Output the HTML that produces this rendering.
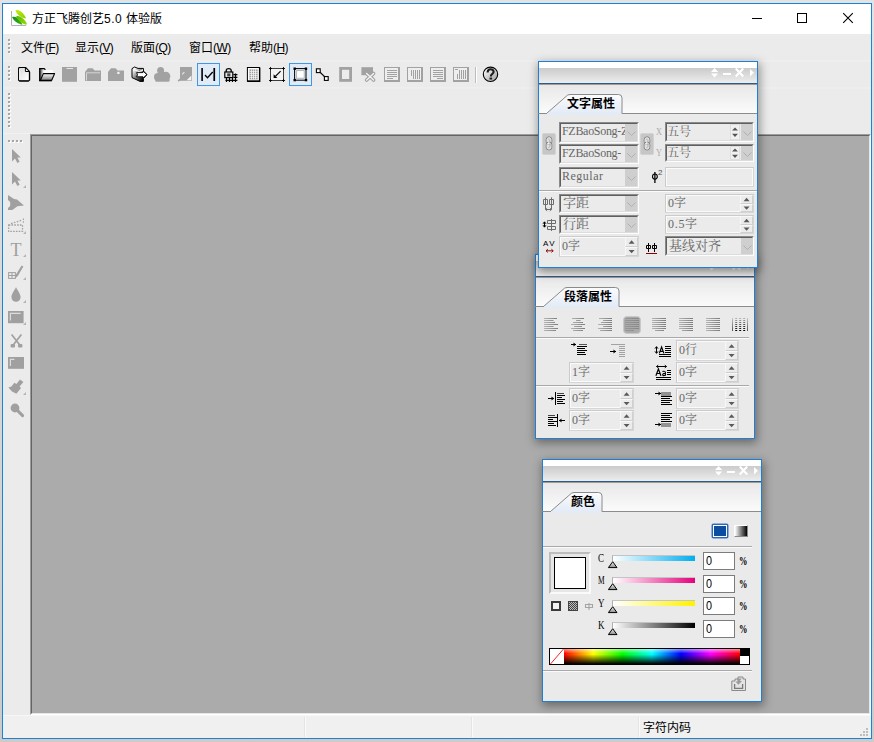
<!DOCTYPE html>
<html lang="zh"><head><meta charset="utf-8"><title>方正飞腾创艺5.0 体验版</title>
<style>
html,body{margin:0;padding:0}
body{width:874px;height:742px;position:relative;overflow:hidden;background:linear-gradient(#e3e3e3,#cdcbca);
 font-family:"Liberation Sans","Noto Sans CJK SC",sans-serif;font-size:12px;color:#000}
div,svg,span{position:absolute;box-sizing:border-box}
svg{overflow:visible}
.t{white-space:nowrap;line-height:16px;height:16px}
.ss{font-family:"Liberation Serif","Noto Serif CJK SC",serif;color:#666;font-size:12px;white-space:nowrap;line-height:14px}
.mono{font-family:"Liberation Mono","Noto Serif CJK SC",monospace;color:#666;font-size:10px;white-space:nowrap;line-height:14px}
.sunk{border:1px solid;border-color:#8a8a8a #fdfdfd #fdfdfd #8a8a8a;background:#ebebeb}
.sunk:before{content:"";position:absolute;left:0;top:0;right:0;bottom:0;border:1px solid;border-color:#5f5f5f #dcdcdc #dcdcdc #5f5f5f}
.flat{border:1px solid;border-color:#cbcbcb #d6d6d6 #d6d6d6 #cbcbcb;background:#ebebeb}
.flat:before{content:"";position:absolute;left:0;top:0;right:0;bottom:0;border:1px solid #fafafa}
.dd{background:#cfcfcf}
.hl{border:1px solid #3d97ea;background:#e1ebf8}
.grip i{position:absolute;width:2px;height:2px;background:#fff}
.grip i:before{content:"";position:absolute;left:-1px;top:-1px;width:2px;height:2px;background:#a6a6a6}
.panel{background:#eaeaea;border:1px solid #1c80d6;box-shadow:1px 3px 9px 1px rgba(0,0,0,.38)}
.sep{height:2px;border-top:1px solid #a9a9a9;border-bottom:1px solid #fbfbfb}
</style></head>
<body>
<div style="left:2px;top:3px;width:870px;height:736px;border:1px solid #1883d7;background:#ebebeb"></div>
<div style="left:3px;top:4px;width:868px;height:30px;background:#fff"></div>
<svg style="left:11px;top:9px" width="17" height="17" viewBox="0 0 17 17" >
<defs><linearGradient id="lf1" x1="0" y1="0" x2="1" y2="1"><stop offset="0" stop-color="#0a9416"/><stop offset="1" stop-color="#3fae1c"/></linearGradient>
<linearGradient id="lf2" x1="0" y1="0" x2="1" y2="1"><stop offset="0" stop-color="#c6ee08"/><stop offset="1" stop-color="#86cf00"/></linearGradient>
<linearGradient id="lf3" x1="0" y1="0" x2="1" y2="1"><stop offset="0" stop-color="#58b800"/><stop offset="1" stop-color="#9add00"/></linearGradient></defs>
<path d="M0.5 2 V16.5 H15" fill="none" stroke="#b2b2b2" stroke-width="1"/>
<path d="M4.4 1.4 C7.4 0 12.8 3.6 15 9.4 C11.2 9 6 6.2 4.4 1.4Z" fill="url(#lf2)"/>
<path d="M1 8 C4.6 6.6 9.6 10 11.4 15.8 C7.6 15 2.8 12.4 1 8Z" fill="url(#lf1)"/>
<path d="M5.2 7.4 C8.6 6 14 10 16.2 15.6 C12 15.4 7 12 5.2 7.4Z" fill="url(#lf3)"/>
</svg>
<div class="t" style="left:32px;top:11px;font-size:12px">方正飞腾创艺<span style="position:static;letter-spacing:0.5px">5.0 </span>体验版</div>
<div style="left:752px;top:18px;width:10px;height:1px;background:#000"></div>
<div style="left:797px;top:13px;width:10px;height:10px;border:1px solid #000"></div>
<svg style="left:843px;top:13px" width="10" height="10" viewBox="0 0 10 10" ><path d="M0.2 0.2 L9.8 9.8 M9.8 0.2 L0.2 9.8" stroke="#000" stroke-width="1.1" fill="none"/></svg>
<div style="left:3px;top:60px;width:868px;height:2px;background:#eeeeee"></div>
<div style="left:3px;top:87px;width:868px;height:2px;background:#eeeeee"></div>
<div style="left:3px;top:133px;width:27px;height:1px;background:#f1f1f1"></div>
<div class="grip" style="left:9px;top:40px"><i style="left:0;top:0px"></i><i style="left:0;top:4px"></i><i style="left:0;top:8px"></i><i style="left:0;top:12px"></i></div>
<div class="grip" style="left:9px;top:67px"><i style="left:0;top:0px"></i><i style="left:0;top:4px"></i><i style="left:0;top:8px"></i><i style="left:0;top:12px"></i></div>
<div class="grip" style="left:9px;top:94px"><i style="left:0;top:0px"></i><i style="left:0;top:4px"></i><i style="left:0;top:8px"></i><i style="left:0;top:12px"></i><i style="left:0;top:16px"></i><i style="left:0;top:20px"></i><i style="left:0;top:24px"></i><i style="left:0;top:28px"></i><i style="left:0;top:32px"></i></div>
<div class="grip" style="left:9px;top:141px"><i style="left:0px;top:0"></i><i style="left:4px;top:0"></i><i style="left:8px;top:0"></i><i style="left:12px;top:0"></i></div>
<div class="t" style="left:21px;top:40px">文件<span style="position:static;letter-spacing:-0.6px">(<u>F</u>)</span></div>
<div class="t" style="left:75px;top:40px">显示<span style="position:static;letter-spacing:-0.6px">(<u>V</u>)</span></div>
<div class="t" style="left:131px;top:40px">版面<span style="position:static;letter-spacing:-0.6px">(<u>Q</u>)</span></div>
<div class="t" style="left:189px;top:40px">窗口<span style="position:static;letter-spacing:-0.6px">(<u>W</u>)</span></div>
<div class="t" style="left:249px;top:40px">帮助<span style="position:static;letter-spacing:-0.6px">(<u>H</u>)</span></div>
<div style="left:30px;top:134px;width:841px;height:581px;border:1px solid;border-color:#9d9d9d #fff #fff #9d9d9d;background:#ababab"></div>
<div style="left:31px;top:135px;width:839px;height:579px;border:1px solid;border-color:#646464 #e6e6e6 #e6e6e6 #646464"></div>
<div style="left:3px;top:715px;width:868px;height:23px;background:#f0f0f0"></div>
<div style="left:3px;top:715px;width:868px;height:1px;background:#f7f7f7"></div>
<div class="t" style="left:643px;top:720px">字符内码</div>
<div style="left:304px;top:717px;width:1px;height:20px;background:#e4e4e4"></div>
<div style="left:305px;top:717px;width:1px;height:20px;background:#fafafa"></div>
<div style="left:471px;top:717px;width:1px;height:20px;background:#e4e4e4"></div>
<div style="left:472px;top:717px;width:1px;height:20px;background:#fafafa"></div>
<div style="left:638px;top:717px;width:1px;height:20px;background:#e4e4e4"></div>
<div style="left:639px;top:717px;width:1px;height:20px;background:#fafafa"></div>
<div style="left:866px;top:728px;width:2px;height:2px;background:#bdbdbd"></div>
<div style="left:863px;top:731px;width:2px;height:2px;background:#bdbdbd"></div>
<div style="left:866px;top:731px;width:2px;height:2px;background:#bdbdbd"></div>
<div style="left:860px;top:734px;width:2px;height:2px;background:#bdbdbd"></div>
<div style="left:863px;top:734px;width:2px;height:2px;background:#bdbdbd"></div>
<div style="left:866px;top:734px;width:2px;height:2px;background:#bdbdbd"></div>
<svg style="left:16px;top:66px" width="16" height="16" viewBox="0 0 16 16" ><defs><linearGradient id="gdoc" x1="0" y1="0" x2="1" y2="1"><stop offset="0" stop-color="#d6d6d6"/><stop offset="0.8" stop-color="#fbfbfb"/></linearGradient></defs>
<path d="M3.4 1.5 H9.6 L13.4 5.3 V14 Q13.4 14.8 12.6 14.8 H3.4 Q2.6 14.8 2.6 14 V2.3 Q2.6 1.5 3.4 1.5 Z" fill="url(#gdoc)" stroke="#000" stroke-width="1.1" stroke-linejoin="round"/>
<path d="M3.2 15.2 H12.8 M13.7 6 V14.4" fill="none" stroke="#000" stroke-width="1"/>
<path d="M9.4 1.7 V5.5 H13.2 Z" fill="#fff" stroke="#000" stroke-width="1" stroke-linejoin="round"/>
<path d="M3.7 3 V13.6" stroke="#fff" stroke-width="0.9"/></svg>
<svg style="left:39px;top:66px" width="16" height="16" viewBox="0 0 16 16" ><defs><linearGradient id="gfol" x1="0" y1="0" x2="0" y2="1"><stop offset="0" stop-color="#fff"/><stop offset="1" stop-color="#7c7c7c"/></linearGradient>
<linearGradient id="gback" x1="0" y1="0" x2="1" y2="0"><stop offset="0" stop-color="#3a3a3a"/><stop offset="0.32" stop-color="#fff"/></linearGradient></defs>
<path d="M0.6 2.6 H5 L6 4 H14 V8 H4 L1.5 14.4 H0.6 Z" fill="url(#gback)"/>
<path d="M0.7 2 V15 M0.2 2.6 H5.2 L6.4 3.9" fill="none" stroke="#000" stroke-width="1.2"/>
<path d="M4.4 7.6 H15.6 L12.7 14.3 H1.4 Z" fill="url(#gfol)" stroke="#000" stroke-width="1.1" stroke-linejoin="round"/>
<path d="M0.2 14.7 H12.8" stroke="#000" stroke-width="1.3"/></svg>
<svg style="left:62px;top:66px" width="16" height="16" viewBox="0 0 16 16" ><rect x="0" y="1" width="15" height="14.8" fill="#a2a2a2"/><rect x="4.5" y="2" width="6.5" height="1" fill="#e6e6e6"/></svg>
<svg style="left:85px;top:66px" width="16" height="16" viewBox="0 0 16 16" ><path d="M0 15 V6 L3 2.2 H7.6 L9.6 4.4 H16 V15 Z" fill="#a2a2a2"/><path d="M1.5 14.6 V6.8 H15" fill="none" stroke="#d6d6d6" stroke-width="1"/></svg>
<svg style="left:108px;top:66px" width="16" height="16" viewBox="0 0 16 16" ><path d="M0 15 V6 L3 2.2 H7.6 L9.6 4.4 H16 V15 Z" fill="#a2a2a2"/><rect x="9.3" y="5.8" width="2.2" height="2.2" fill="#f4f4f4"/></svg>
<svg style="left:131px;top:66px" width="16" height="16" viewBox="0 0 16 16" ><defs><linearGradient id="gex" x1="0" y1="0.1" x2="1" y2="0.9"><stop offset="0.1" stop-color="#fff"/><stop offset="0.5" stop-color="#6a6a6a"/><stop offset="0.85" stop-color="#000"/></linearGradient></defs>
<path d="M1 2.6 L3.6 1 L7 2.4 L12.4 2.4 V5 L16 8.6 L12.4 12.4 V15.4 H9 L1 11.6 Z" fill="url(#gex)" stroke="#000" stroke-width="1" stroke-linejoin="round"/>
<path d="M2 3.4 L8.4 5.6 L12 3.6" fill="none" stroke="#fff" stroke-width="1"/>
<path d="M8.4 5.6 L12 3.4 V5.6 Z" fill="#e8e8e8"/>
<path d="M5.6 6.6 H12 V5 L15.8 8.6 L12 12.2 V10.8 H5.6 Q7.4 8.6 5.6 6.6 Z" fill="#fff" stroke="#000" stroke-width="0.9" stroke-linejoin="round"/></svg>
<svg style="left:154px;top:66px" width="16" height="16" viewBox="0 0 16 16" ><circle cx="6.6" cy="4.4" r="3.5" fill="#a2a2a2"/><circle cx="4" cy="11" r="4" fill="#a2a2a2"/><circle cx="11.8" cy="10.2" r="4.5" fill="#a2a2a2"/><rect x="4" y="6" width="8" height="8" fill="#a2a2a2"/><rect x="1.2" y="12" width="14.4" height="3.8" rx="1.4" fill="#a2a2a2"/></svg>
<svg style="left:177px;top:66px" width="16" height="16" viewBox="0 0 16 16" ><rect x="3" y="1" width="12" height="13.8" fill="#a2a2a2"/><path d="M1.2 15.2 L4 12.6" stroke="#a2a2a2" stroke-width="1.6"/><path d="M5.2 8.4 L7.4 6.2" stroke="#e9e9e9" stroke-width="1.1"/><path d="M14.4 9.4 V14.2 H9.6 Z" fill="#f2f2f2"/></svg>
<div class="hl" style="left:197px;top:63px;width:23px;height:23px;"></div>
<svg style="left:200px;top:66px" width="16" height="16" viewBox="0 0 16 16" ><rect x="1.3" y="2" width="1.6" height="13" fill="#000"/><rect x="13.4" y="2" width="1.7" height="13" fill="#000"/><path d="M5 9 L7.5 11.7 L12.7 6" fill="none" stroke="#000" stroke-width="1.3"/></svg>
<svg style="left:223px;top:66px" width="16" height="16" viewBox="0 0 16 16" ><path d="M3.2 6 V4.6 C3.2 1.9 8.2 1.9 8.2 4.6 V6" fill="none" stroke="#000" stroke-width="1.3"/>
<rect x="1.8" y="6" width="8" height="5.6" fill="#e8e8e8" stroke="#000" stroke-width="1.2"/><rect x="4.2" y="7.4" width="3.2" height="3" fill="#444"/>
<path d="M3.5 12 V16 M6.5 12 V16 M9.5 12 V16 M12.5 7.4 V16 M10.4 8.6 H14.4 M10.4 11.4 H14.4 M2.4 14.4 H14.4" stroke="#000" stroke-width="1.2" fill="none"/></svg>
<svg style="left:246px;top:66px" width="16" height="16" viewBox="0 0 16 16" ><rect x="1.4" y="1.5" width="12" height="13.6" fill="#fff" stroke="#000" stroke-width="1"/><path d="M1.2 15.3 H13.7 V1.4" fill="none" stroke="#000" stroke-width="1.4"/>
<rect x="3.4" y="3.4" width="8.2" height="10" fill="#9c9c9c"/>
<path d="M5.5 3.4 V13.4 M7.5 3.4 V13.4 M9.5 3.4 V13.4 M3.4 5.4 H11.6 M3.4 7.4 H11.6 M3.4 9.4 H11.6 M3.4 11.4 H11.6" stroke="#f4f4f4" stroke-width="0.8" fill="none"/></svg>
<svg style="left:269px;top:66px" width="16" height="16" viewBox="0 0 16 16" ><rect x="1.5" y="2.5" width="13" height="12" fill="#f4f4f4" stroke="#111" stroke-width="0.8"/>
<path d="M0 2.5 H3 M13 2.5 H16 M0 14.5 H3 M13 14.5 H16 M1.5 1 V4 M14.5 1 V4 M1.5 13 V16 M14.5 13 V16" stroke="#000" stroke-width="0.9"/>
<path d="M11.6 5.2 L6.4 10.4" stroke="#000" stroke-width="1.2"/><path d="M4.6 12 V8.2 L8.4 12 Z" fill="#000"/></svg>
<div class="hl" style="left:289px;top:63px;width:23px;height:23px;"></div>
<svg style="left:292px;top:66px" width="16" height="16" viewBox="0 0 16 16" ><rect x="2.6" y="2.6" width="11.4" height="11.6" fill="none" stroke="#000" stroke-width="1"/>
<rect x="1.5" y="1.5" width="2.4" height="2.4" fill="#000"/><rect x="12.8" y="1.5" width="2.4" height="2.4" fill="#000"/><rect x="1.5" y="12.9" width="2.4" height="2.4" fill="#000"/><rect x="12.8" y="12.9" width="2.4" height="2.4" fill="#000"/>
<rect x="4.6" y="4.6" width="7.6" height="7.6" fill="#fff" stroke="#adadad" stroke-width="0.9"/></svg>
<svg style="left:315px;top:66px" width="16" height="16" viewBox="0 0 16 16" ><path d="M3.4 4.6 L11.6 12.6" stroke="#000" stroke-width="1.3"/><rect x="1.4" y="2.8" width="3.8" height="3.8" fill="#fff" stroke="#000" stroke-width="1.1"/><rect x="9.4" y="10.6" width="3.8" height="3.8" fill="#fff" stroke="#000" stroke-width="1.1"/></svg>
<svg style="left:338px;top:66px" width="16" height="16" viewBox="0 0 16 16" ><rect x="2.6" y="2.4" width="10" height="12" fill="#ededed" stroke="#a2a2a2" stroke-width="2.8"/></svg>
<svg style="left:361px;top:66px" width="16" height="16" viewBox="0 0 16 16" ><rect x="0.4" y="1.2" width="11.6" height="8" fill="#a2a2a2"/><path d="M5.6 7.4 L12.6 14 M12.6 7.4 L5.6 14" stroke="#a2a2a2" stroke-width="3.6" stroke-linecap="round"/><path d="M5.6 7.4 L12.6 14 M12.6 7.4 L5.6 14" stroke="#f2f2f2" stroke-width="1.4" stroke-linecap="round"/></svg>
<svg style="left:384px;top:66px" width="16" height="16" viewBox="0 0 16 16" ><rect x="0" y="1" width="16" height="15" fill="#a2a2a2"/><rect x="1" y="2" width="13" height="12" fill="#eeeeee"/><rect x="3" y="4" width="10" height="1" fill="#a2a2a2"/><rect x="3" y="6" width="10" height="1" fill="#a2a2a2"/><rect x="3" y="8" width="10" height="1" fill="#a2a2a2"/><rect x="3" y="10" width="10" height="1" fill="#a2a2a2"/><rect x="3" y="12" width="6" height="1" fill="#a2a2a2"/></svg>
<svg style="left:407px;top:66px" width="16" height="16" viewBox="0 0 16 16" ><rect x="0" y="1" width="16" height="15" fill="#a2a2a2"/><rect x="1" y="2" width="13" height="12" fill="#eeeeee"/><rect x="12" y="4" width="1" height="9" fill="#a2a2a2"/><rect x="10" y="4" width="1" height="9" fill="#a2a2a2"/><rect x="8" y="4" width="1" height="9" fill="#a2a2a2"/><rect x="6" y="4" width="1" height="9" fill="#a2a2a2"/><rect x="4" y="4" width="1" height="6" fill="#a2a2a2"/></svg>
<svg style="left:430px;top:66px" width="16" height="16" viewBox="0 0 16 16" ><rect x="0" y="1" width="16" height="15" fill="#a2a2a2"/><rect x="1" y="2" width="13" height="12" fill="#eeeeee"/><rect x="3" y="4" width="10" height="1" fill="#a2a2a2"/><rect x="3" y="6" width="10" height="1" fill="#a2a2a2"/><rect x="3" y="8" width="10" height="1" fill="#a2a2a2"/><rect x="3" y="10" width="10" height="1" fill="#a2a2a2"/><rect x="7" y="12" width="6" height="1" fill="#a2a2a2"/></svg>
<svg style="left:453px;top:66px" width="16" height="16" viewBox="0 0 16 16" ><rect x="0" y="1" width="16" height="15" fill="#a2a2a2"/><rect x="1" y="2" width="13" height="12" fill="#eeeeee"/><rect x="12" y="4" width="1" height="9" fill="#a2a2a2"/><rect x="10" y="4" width="1" height="9" fill="#a2a2a2"/><rect x="8" y="4" width="1" height="9" fill="#a2a2a2"/><rect x="6" y="4" width="1" height="9" fill="#a2a2a2"/><rect x="4" y="8" width="1" height="5" fill="#a2a2a2"/><rect x="2" y="3" width="3" height="1" fill="#a2a2a2"/></svg>
<div style="left:475px;top:67px;width:1px;height:16px;background:#bdbdbd"></div>
<div style="left:476px;top:67px;width:1px;height:16px;background:#fff"></div>
<svg style="left:483px;top:66px" width="16" height="16" viewBox="0 0 16 16" ><defs><linearGradient id="ghelp" x1="0" y1="0" x2="1" y2="1"><stop offset="0.1" stop-color="#fafafa"/><stop offset="1" stop-color="#9c9c9c"/></linearGradient></defs>
<circle cx="7.5" cy="8.3" r="7.2" fill="url(#ghelp)" stroke="#000" stroke-width="1.1"/>
<path d="M4.6 6.4 C4.6 2.4 10.6 2.4 10.6 5.8 C10.6 8 7.8 8 7.8 10.4" fill="none" stroke="#1a1a1a" stroke-width="2.1"/><rect x="6.5" y="11.6" width="2.6" height="1.9" fill="#1a1a1a"/></svg>
<svg style="left:12px;top:149px" width="9" height="14" viewBox="0 0 9 14" ><path d="M0 0 V12.4 L3 9.6 L5.4 14 L7.6 12.8 L5.4 8.6 H8.8 Z" fill="#a0a0a0"/></svg>
<svg style="left:12px;top:172px" width="9" height="14" viewBox="0 0 9 14" ><path d="M0 0 V12.4 L3 9.6 L5.4 14 L7.6 12.8 L5.4 8.6 H8.8 Z" fill="#a0a0a0"/></svg>
<svg style="left:23px;top:185px" width="3" height="3" viewBox="0 0 3 3" ><path d="M3 0 V3 H0 Z" fill="#b4b4b4"/></svg>
<svg style="left:7px;top:194px" width="17" height="17" viewBox="0 0 17 17" ><path d="M1 1 L7 5 L10 5.6 L17 11.4 L10.4 12.2 L5.4 16 H1 V14 L3.2 12 V8 L1 6 Z" fill="#a0a0a0"/></svg>
<svg style="left:8px;top:218px" width="16" height="15" viewBox="0 0 16 15" ><path d="M3 5.6 L13.4 2.4" stroke="#a0a0a0" stroke-width="1.3" stroke-dasharray="1.6 1.4" fill="none"/><rect x="0.7" y="7" width="13.8" height="6.4" fill="none" stroke="#a0a0a0" stroke-width="1.3" stroke-dasharray="1.6 1.2"/><path d="M15.4 0.4 V5.4" stroke="#a0a0a0" stroke-width="1.1" stroke-dasharray="1.6 1.2"/></svg>
<svg style="left:23px;top:231px" width="3" height="3" viewBox="0 0 3 3" ><path d="M3 0 V3 H0 Z" fill="#b4b4b4"/></svg>
<div style="left:9px;top:240px;width:14px;height:20px;font-family:'Liberation Serif',serif;font-size:18px;line-height:20px;color:#a0a0a0;text-align:center">T</div>
<svg style="left:23px;top:254px" width="3" height="3" viewBox="0 0 3 3" ><path d="M3 0 V3 H0 Z" fill="#b4b4b4"/></svg>
<svg style="left:8px;top:265px" width="16" height="14" viewBox="0 0 16 14" ><rect x="0.6" y="7.6" width="6.8" height="5.8" fill="none" stroke="#a0a0a0" stroke-width="1"/><path d="M4 7.6 V13.4 M0.6 10.5 H7.4" stroke="#a0a0a0" stroke-width="1"/><path d="M7 13.4 L8 9.6 L13.6 0.4 L15.4 1.6 L9.8 11 Z" fill="#a0a0a0"/></svg>
<svg style="left:23px;top:277px" width="3" height="3" viewBox="0 0 3 3" ><path d="M3 0 V3 H0 Z" fill="#b4b4b4"/></svg>
<svg style="left:11px;top:287px" width="10" height="15" viewBox="0 0 10 15" ><path d="M5 0 C6 3 9.6 6.6 9.6 10 C9.6 13 7.6 14.8 5 14.8 C2.4 14.8 0.4 13 0.4 10 C0.4 6.6 4 3 5 0 Z" fill="#a0a0a0"/></svg>
<svg style="left:23px;top:300px" width="3" height="3" viewBox="0 0 3 3" ><path d="M3 0 V3 H0 Z" fill="#b4b4b4"/></svg>
<svg style="left:8px;top:311px" width="16" height="12" viewBox="0 0 16 12" ><rect x="0.7" y="0.7" width="14.2" height="10.8" fill="#a0a0a0" stroke="#a0a0a0" stroke-width="1.4"/><path d="M2.4 9.6 V2.4 H12.6" stroke="#dcdcdc" stroke-width="1.2" fill="none"/></svg>
<svg style="left:23px;top:322px" width="3" height="3" viewBox="0 0 3 3" ><path d="M3 0 V3 H0 Z" fill="#b4b4b4"/></svg>
<svg style="left:10px;top:334px" width="13" height="14" viewBox="0 0 13 14" ><path d="M1.6 0.4 L9.4 10.4 M11.4 0.4 L3.6 10.4" stroke="#a0a0a0" stroke-width="1.7" fill="none"/><rect x="0.6" y="10" width="4.4" height="3.6" rx="1" fill="#a0a0a0"/><rect x="8" y="10" width="4.4" height="3.6" rx="1" fill="#a0a0a0"/></svg>
<svg style="left:8px;top:357px" width="16" height="12" viewBox="0 0 16 12" ><rect x="0.7" y="0.7" width="14.6" height="10.4" fill="#a0a0a0" stroke="#a0a0a0" stroke-width="1.4"/><path d="M2.4 9 V2.4 H6.4" stroke="#dcdcdc" stroke-width="1.2" fill="none"/></svg>
<svg style="left:8px;top:379px" width="16" height="15" viewBox="0 0 16 15" ><path d="M12 0.4 L15.4 3 L11.6 7.4 L13 9 L8.4 14.8 L4 12.6 L0.4 8.4 L3.4 7.6 L6.4 3.8 L8.4 5 Z" fill="#a0a0a0"/></svg>
<svg style="left:23px;top:392px" width="3" height="3" viewBox="0 0 3 3" ><path d="M3 0 V3 H0 Z" fill="#b4b4b4"/></svg>
<svg style="left:10px;top:403px" width="14" height="14" viewBox="0 0 14 14" ><circle cx="5" cy="5" r="4.4" fill="#a0a0a0"/><path d="M7.6 7.6 L12.6 12.6" stroke="#a0a0a0" stroke-width="3" stroke-linecap="round"/></svg>
<div class="panel" style="left:535px;top:254px;width:220px;height:185px;"></div>
<div style="left:536px;top:255px;width:218px;height:6px;background:#fff"></div>
<div style="left:536px;top:261px;width:218px;height:15px;background:linear-gradient(#cbcbcb,#ededed)"></div>
<div style="left:536px;top:276px;width:218px;height:1px;background:#2b5b8c"></div>
<div style="left:536px;top:277px;width:218px;height:1px;background:#9f9b97"></div>
<div style="left:536px;top:278px;width:218px;height:28px;background:linear-gradient(#e8e8e8,#fbfbfb)"></div>
<div style="left:536px;top:306px;width:218px;height:1px;background:#8c8c8c"></div>
<svg style="left:708px;top:261px" width="8" height="10" viewBox="0 0 8 10" ><path d="M0 4 L3.6 0 L7.2 4 Z M0 5.4 L3.6 9.4 L7.2 5.4 Z" fill="#fff"/></svg>
<div style="left:720px;top:266px;width:8px;height:2px;background:#fff"></div>
<svg style="left:732px;top:261px" width="9" height="9" viewBox="0 0 9 9" ><path d="M0.8 0.6 L8.2 8.6 M8.2 0.6 L0.8 8.6" stroke="#fff" stroke-width="2.2" fill="none"/></svg>
<svg style="left:747px;top:262px" width="4" height="8" viewBox="0 0 4 8" ><path d="M0 0 L4 3.8 L0 7.6 Z" fill="#fff"/></svg>
<svg style="left:543px;top:287px" width="78.5" height="21" viewBox="0 0 78.5 21" ><defs><linearGradient id="tab535" x1="0" y1="0" x2="0" y2="1"><stop offset="0" stop-color="#fbfcfe"/><stop offset="1" stop-color="#e3ebf6"/></linearGradient></defs>
<path d="M0 19.5 H0.5 L20 2.5 Q21.5 0.5 24 0.5 H72.5 Q76.0 0.5 76.0 4 V19.5 Z" fill="url(#tab535)"/>
<path d="M-8 19.5 H0.5 L20 2.5 Q21.5 0.5 24 0.5 H72.5 Q76.0 0.5 76.0 4 V19.5" fill="none" stroke="#8a8a8a" stroke-width="1"/>
<rect x="1" y="19" width="74.5" height="2" fill="#e3ebf6"/></svg>
<div class="t" style="left:564px;top:288px;font-weight:bold;font-size:12px;line-height:18px;height:18px">段落属性</div>
<div style="left:623px;top:316px;width:18px;height:18px;background:#ababab;border:1px solid #c8c8c8;border-radius:4px"></div>
<svg style="left:544px;top:318px" width="14" height="14" viewBox="0 0 14 14" ><defs><linearGradient id="al544" x1="0" y1="0" x2="14" y2="0" gradientUnits="userSpaceOnUse"><stop offset="0" stop-color="#b4b4b4"/><stop offset="1" stop-color="#7c7c7c"/></linearGradient></defs><rect x="0" y="0" width="13" height="1" fill="url(#al544)"/><rect x="0" y="2" width="9.5" height="1" fill="url(#al544)"/><rect x="0" y="4" width="11" height="1" fill="url(#al544)"/><rect x="0" y="6" width="14" height="1" fill="url(#al544)"/><rect x="0" y="8" width="9.5" height="1" fill="url(#al544)"/><rect x="0" y="10" width="14" height="1" fill="url(#al544)"/><rect x="0" y="12" width="12" height="1" fill="url(#al544)"/></svg>
<svg style="left:571px;top:318px" width="14" height="14" viewBox="0 0 14 14" ><defs><linearGradient id="al571" x1="0" y1="0" x2="14" y2="0" gradientUnits="userSpaceOnUse"><stop offset="0" stop-color="#b4b4b4"/><stop offset="1" stop-color="#7c7c7c"/></linearGradient></defs><rect x="1" y="0" width="12" height="1" fill="url(#al571)"/><rect x="5" y="2" width="4.5" height="1" fill="url(#al571)"/><rect x="2" y="4" width="10" height="1" fill="url(#al571)"/><rect x="0" y="6" width="14" height="1" fill="url(#al571)"/><rect x="3" y="8" width="8" height="1" fill="url(#al571)"/><rect x="0" y="10" width="14" height="1" fill="url(#al571)"/><rect x="2" y="12" width="10" height="1" fill="url(#al571)"/></svg>
<svg style="left:598px;top:318px" width="14" height="14" viewBox="0 0 14 14" ><defs><linearGradient id="al598" x1="0" y1="0" x2="14" y2="0" gradientUnits="userSpaceOnUse"><stop offset="0" stop-color="#b4b4b4"/><stop offset="1" stop-color="#7c7c7c"/></linearGradient></defs><rect x="1" y="0" width="13" height="1" fill="url(#al598)"/><rect x="5" y="2" width="9" height="1" fill="url(#al598)"/><rect x="3" y="4" width="11" height="1" fill="url(#al598)"/><rect x="0" y="6" width="14" height="1" fill="url(#al598)"/><rect x="5" y="8" width="9" height="1" fill="url(#al598)"/><rect x="0" y="10" width="14" height="1" fill="url(#al598)"/><rect x="2" y="12" width="12" height="1" fill="url(#al598)"/></svg>
<svg style="left:625px;top:318px" width="14" height="14" viewBox="0 0 14 14" ><defs><linearGradient id="al625" x1="0" y1="0" x2="14" y2="0" gradientUnits="userSpaceOnUse"><stop offset="0" stop-color="#989898"/><stop offset="1" stop-color="#868686"/></linearGradient></defs><rect x="0" y="0" width="14" height="1" fill="url(#al625)"/><rect x="0" y="2" width="14" height="1" fill="url(#al625)"/><rect x="0" y="4" width="14" height="1" fill="url(#al625)"/><rect x="0" y="6" width="14" height="1" fill="url(#al625)"/><rect x="0" y="8" width="14" height="1" fill="url(#al625)"/><rect x="0" y="10" width="14" height="1" fill="url(#al625)"/><rect x="0" y="12" width="9" height="1" fill="url(#al625)"/></svg>
<svg style="left:652px;top:318px" width="14" height="14" viewBox="0 0 14 14" ><defs><linearGradient id="al652" x1="0" y1="0" x2="14" y2="0" gradientUnits="userSpaceOnUse"><stop offset="0" stop-color="#b4b4b4"/><stop offset="1" stop-color="#7c7c7c"/></linearGradient></defs><rect x="0" y="0" width="14" height="1" fill="url(#al652)"/><rect x="0" y="2" width="14" height="1" fill="url(#al652)"/><rect x="0" y="4" width="14" height="1" fill="url(#al652)"/><rect x="0" y="6" width="14" height="1" fill="url(#al652)"/><rect x="0" y="8" width="14" height="1" fill="url(#al652)"/><rect x="0" y="10" width="14" height="1" fill="url(#al652)"/><rect x="3" y="12" width="9" height="1" fill="url(#al652)"/></svg>
<svg style="left:679px;top:318px" width="14" height="14" viewBox="0 0 14 14" ><defs><linearGradient id="al679" x1="0" y1="0" x2="14" y2="0" gradientUnits="userSpaceOnUse"><stop offset="0" stop-color="#b4b4b4"/><stop offset="1" stop-color="#7c7c7c"/></linearGradient></defs><rect x="0" y="0" width="14" height="1" fill="url(#al679)"/><rect x="0" y="2" width="14" height="1" fill="url(#al679)"/><rect x="0" y="4" width="14" height="1" fill="url(#al679)"/><rect x="0" y="6" width="14" height="1" fill="url(#al679)"/><rect x="0" y="8" width="14" height="1" fill="url(#al679)"/><rect x="0" y="10" width="14" height="1" fill="url(#al679)"/><rect x="3" y="12" width="11" height="1" fill="url(#al679)"/></svg>
<svg style="left:706px;top:318px" width="14" height="14" viewBox="0 0 14 14" ><defs><linearGradient id="al706" x1="0" y1="0" x2="14" y2="0" gradientUnits="userSpaceOnUse"><stop offset="0" stop-color="#b4b4b4"/><stop offset="1" stop-color="#7c7c7c"/></linearGradient></defs><rect x="0" y="0" width="14" height="1" fill="url(#al706)"/><rect x="0" y="2" width="14" height="1" fill="url(#al706)"/><rect x="0" y="4" width="14" height="1" fill="url(#al706)"/><rect x="0" y="6" width="14" height="1" fill="url(#al706)"/><rect x="0" y="8" width="14" height="1" fill="url(#al706)"/><rect x="0" y="10" width="14" height="1" fill="url(#al706)"/><rect x="0" y="12" width="14" height="1" fill="url(#al706)"/></svg>
<svg style="left:732px;top:318px" width="16" height="14" viewBox="0 0 16 14" ><defs><linearGradient id="vl" x1="0" y1="0" x2="0" y2="1"><stop offset="0" stop-color="#c8c8c8"/><stop offset="1" stop-color="#555"/></linearGradient><linearGradient id="vd" x1="0" y1="0" x2="0" y2="13" gradientUnits="userSpaceOnUse"><stop offset="0" stop-color="#b8b8b8"/><stop offset="0.6" stop-color="#444"/><stop offset="1" stop-color="#000"/></linearGradient></defs><rect x="0" y="0" width="1" height="13" fill="url(#vl)"/><rect x="15" y="0" width="1" height="13" fill="url(#vl)"/><rect x="3.2" y="0" width="2" height="1" fill="url(#vd)"/><rect x="3.2" y="2" width="2" height="1" fill="url(#vd)"/><rect x="3.2" y="4" width="2" height="1" fill="url(#vd)"/><rect x="3.2" y="6" width="2" height="1" fill="url(#vd)"/><rect x="3.2" y="8" width="2" height="1" fill="url(#vd)"/><rect x="3.2" y="10" width="2" height="1" fill="url(#vd)"/><rect x="3.2" y="12" width="2" height="1" fill="url(#vd)"/><rect x="7.2" y="0" width="2" height="1" fill="url(#vd)"/><rect x="7.2" y="2" width="2" height="1" fill="url(#vd)"/><rect x="7.2" y="4" width="2" height="1" fill="url(#vd)"/><rect x="7.2" y="6" width="2" height="1" fill="url(#vd)"/><rect x="7.2" y="8" width="2" height="1" fill="url(#vd)"/><rect x="7.2" y="10" width="2" height="1" fill="url(#vd)"/><rect x="7.2" y="12" width="2" height="1" fill="url(#vd)"/><rect x="11.2" y="0" width="2" height="1" fill="url(#vd)"/><rect x="11.2" y="2" width="2" height="1" fill="url(#vd)"/><rect x="11.2" y="4" width="2" height="1" fill="url(#vd)"/><rect x="11.2" y="6" width="2" height="1" fill="url(#vd)"/><rect x="11.2" y="8" width="2" height="1" fill="url(#vd)"/><rect x="11.2" y="10" width="2" height="1" fill="url(#vd)"/><rect x="11.2" y="12" width="2" height="1" fill="url(#vd)"/></svg>
<div class="sep" style="left:536px;top:337px;width:213px;height:2px;"></div>
<div class="sep" style="left:536px;top:385px;width:213px;height:2px;"></div>
<svg style="left:571px;top:342px" width="17" height="14" viewBox="0 0 17 14" ><rect x="0" y="2" width="5" height="1" fill="#000"/><path d="M2.5 0.5 L5 2.5 L2.5 4.5 Z" fill="#000"/><rect x="8" y="2" width="8" height="1" fill="#555"/><rect x="6" y="4" width="10" height="1" fill="#000"/><rect x="6" y="6" width="8" height="1" fill="#000"/><rect x="6" y="8" width="10" height="1" fill="#000"/><rect x="6" y="10" width="8" height="1" fill="#000"/><rect x="6" y="12" width="9" height="1" fill="#000"/></svg>
<svg style="left:610px;top:343px" width="16" height="15" viewBox="0 0 16 15" ><rect x="1" y="1" width="14" height="1" fill="#a2a2a2"/><rect x="9" y="3" width="6" height="1" fill="#a2a2a2"/><rect x="9" y="5" width="6" height="1" fill="#a2a2a2"/><rect x="9" y="7" width="6" height="1" fill="#a2a2a2"/><rect x="9" y="9" width="6" height="1" fill="#a2a2a2"/><rect x="9" y="11" width="6" height="1" fill="#a2a2a2"/><rect x="9" y="13" width="6" height="1" fill="#a2a2a2"/><rect x="0" y="8" width="6" height="1" fill="#000"/><path d="M3.5 6.5 L6 8.5 L3.5 10.5 Z" fill="#000"/></svg>
<svg style="left:655px;top:345px" width="17" height="13" viewBox="0 0 17 13" ><path d="M1.5 2 V8 M0 3.6 L1.5 1.6 L3 3.6 M0 6.4 L1.5 8.4 L3 6.4" stroke="#000" stroke-width="1" fill="none"/><path d="M4.3 8.4 L6.6 2 L8.9 8.4 M5.3 6.3 H7.9" stroke="#000" stroke-width="1.2" fill="none"/><rect x="10" y="1" width="6" height="1" fill="#000"/><rect x="10" y="3" width="6" height="1" fill="#000"/><rect x="10" y="5" width="6" height="1" fill="#000"/><rect x="10" y="7" width="6" height="1" fill="#000"/><rect x="4" y="9" width="12" height="1" fill="#000"/><rect x="4" y="11" width="12" height="1" fill="#000"/></svg>
<svg style="left:655px;top:365px" width="17" height="16" viewBox="0 0 17 16" ><path d="M1.5 1.5 H11.5 M3.2 0.2 L1.5 1.5 L3.2 2.8 M9.8 0.2 L11.5 1.5 L9.8 2.8" stroke="#000" stroke-width="1" fill="none"/><path d="M0.9 10.8 L3.4 4 L5.9 10.8 M1.9 8.5 H4.9" stroke="#000" stroke-width="1.2" fill="none"/><path d="M7.4 6.6 C9.6 5.6 10.4 6.6 10.4 7.8 V10.8 M10.4 8.2 C7.4 8 7 10.6 8.6 10.6 C9.6 10.6 10.4 9.8 10.4 9.2" stroke="#000" stroke-width="1.1" fill="none"/><rect x="12" y="5" width="4" height="1" fill="#000"/><rect x="12" y="7" width="4" height="1" fill="#000"/><rect x="12" y="9" width="4" height="1" fill="#000"/><rect x="1" y="12" width="15" height="1" fill="#000"/><rect x="1" y="14" width="15" height="1" fill="#000"/></svg>
<div class="flat" style="left:676px;top:340px;width:63px;height:21px;"></div>
<div style="left:725px;top:341px;width:13px;height:10px;border:1px solid;border-color:#f8f8f8 #cfcfcf #cfcfcf #f8f8f8;background:#ececec"></div>
<div style="left:725px;top:351px;width:13px;height:9px;border:1px solid;border-color:#f8f8f8 #cfcfcf #cfcfcf #f8f8f8;background:#ececec"></div>
<svg style="left:725px;top:340px" width="13" height="21" viewBox="0 0 13 21" ><path d="M3.6 7.7 L6.6 4.3 L9.6 7.7 Z M3.6 13.9 L6.6 17.3 L9.6 13.9 Z" fill="#5a5a5a"/></svg>
<div class="ss" style="left:679px;top:343px;font-size:12px">0行</div>
<div class="flat" style="left:569px;top:362px;width:65px;height:21px;"></div>
<div style="left:620px;top:363px;width:13px;height:10px;border:1px solid;border-color:#f8f8f8 #cfcfcf #cfcfcf #f8f8f8;background:#ececec"></div>
<div style="left:620px;top:373px;width:13px;height:9px;border:1px solid;border-color:#f8f8f8 #cfcfcf #cfcfcf #f8f8f8;background:#ececec"></div>
<svg style="left:620px;top:362px" width="13" height="21" viewBox="0 0 13 21" ><path d="M3.6 7.7 L6.6 4.3 L9.6 7.7 Z M3.6 13.9 L6.6 17.3 L9.6 13.9 Z" fill="#5a5a5a"/></svg>
<div class="ss" style="left:572px;top:365px;font-size:12px">1字</div>
<div class="flat" style="left:676px;top:362px;width:63px;height:21px;"></div>
<div style="left:725px;top:363px;width:13px;height:10px;border:1px solid;border-color:#f8f8f8 #cfcfcf #cfcfcf #f8f8f8;background:#ececec"></div>
<div style="left:725px;top:373px;width:13px;height:9px;border:1px solid;border-color:#f8f8f8 #cfcfcf #cfcfcf #f8f8f8;background:#ececec"></div>
<svg style="left:725px;top:362px" width="13" height="21" viewBox="0 0 13 21" ><path d="M3.6 7.7 L6.6 4.3 L9.6 7.7 Z M3.6 13.9 L6.6 17.3 L9.6 13.9 Z" fill="#5a5a5a"/></svg>
<div class="ss" style="left:679px;top:365px;font-size:12px">0字</div>
<svg style="left:548px;top:391px" width="17" height="15" viewBox="0 0 17 15" ><rect x="0" y="7" width="6" height="1" fill="#000"/><path d="M3.5 5.5 L6 7.5 L3.5 9.5 Z" fill="#000"/><rect x="7" y="1" width="1" height="13" fill="#000"/><rect x="9" y="2" width="7" height="1" fill="#444"/><rect x="9" y="4" width="8" height="1" fill="#000"/><rect x="9" y="6" width="5" height="1" fill="#000"/><rect x="9" y="8" width="8" height="1" fill="#000"/><rect x="9" y="10" width="6" height="1" fill="#000"/><rect x="9" y="12" width="8" height="1" fill="#000"/></svg>
<svg style="left:548px;top:413px" width="17" height="15" viewBox="0 0 17 15" ><rect x="11" y="7" width="6" height="1" fill="#000"/><path d="M13.5 5.5 L11 7.5 L13.5 9.5 Z" fill="#000"/><rect x="9" y="1" width="1" height="13" fill="#000"/><rect x="0" y="2" width="7" height="1" fill="#444"/><rect x="0" y="4" width="9" height="1" fill="#000"/><rect x="0" y="6" width="5" height="1" fill="#000"/><rect x="0" y="8" width="9" height="1" fill="#000"/><rect x="0" y="10" width="6" height="1" fill="#000"/><rect x="0" y="12" width="8" height="1" fill="#000"/></svg>
<svg style="left:655px;top:390px" width="17" height="16" viewBox="0 0 17 16" ><rect x="6" y="2" width="10" height="4" fill="#939393"/><rect x="0" y="3" width="6" height="1" fill="#000"/><path d="M3.5 1.5 L6 3.5 L3.5 5.5 Z" fill="#000"/><rect x="6" y="6" width="11" height="1" fill="#000"/><rect x="6" y="8" width="9" height="1" fill="#000"/><rect x="6" y="10" width="11" height="1" fill="#000"/><rect x="6" y="12" width="9" height="1" fill="#000"/><rect x="6" y="14" width="11" height="1" fill="#000"/></svg>
<svg style="left:655px;top:412px" width="17" height="16" viewBox="0 0 17 16" ><rect x="6" y="11" width="10" height="4" fill="#939393"/><rect x="0" y="12" width="6" height="1" fill="#000"/><path d="M3.5 10.5 L6 12.5 L3.5 14.5 Z" fill="#000"/><rect x="6" y="1" width="11" height="1" fill="#000"/><rect x="6" y="3" width="9" height="1" fill="#000"/><rect x="6" y="5" width="11" height="1" fill="#000"/><rect x="6" y="7" width="9" height="1" fill="#000"/><rect x="6" y="9" width="11" height="1" fill="#000"/></svg>
<div class="flat" style="left:569px;top:388px;width:65px;height:21px;"></div>
<div style="left:620px;top:389px;width:13px;height:10px;border:1px solid;border-color:#f8f8f8 #cfcfcf #cfcfcf #f8f8f8;background:#ececec"></div>
<div style="left:620px;top:399px;width:13px;height:9px;border:1px solid;border-color:#f8f8f8 #cfcfcf #cfcfcf #f8f8f8;background:#ececec"></div>
<svg style="left:620px;top:388px" width="13" height="21" viewBox="0 0 13 21" ><path d="M3.6 7.7 L6.6 4.3 L9.6 7.7 Z M3.6 13.9 L6.6 17.3 L9.6 13.9 Z" fill="#5a5a5a"/></svg>
<div class="ss" style="left:572px;top:391px;font-size:12px">0字</div>
<div class="flat" style="left:676px;top:388px;width:63px;height:21px;"></div>
<div style="left:725px;top:389px;width:13px;height:10px;border:1px solid;border-color:#f8f8f8 #cfcfcf #cfcfcf #f8f8f8;background:#ececec"></div>
<div style="left:725px;top:399px;width:13px;height:9px;border:1px solid;border-color:#f8f8f8 #cfcfcf #cfcfcf #f8f8f8;background:#ececec"></div>
<svg style="left:725px;top:388px" width="13" height="21" viewBox="0 0 13 21" ><path d="M3.6 7.7 L6.6 4.3 L9.6 7.7 Z M3.6 13.9 L6.6 17.3 L9.6 13.9 Z" fill="#5a5a5a"/></svg>
<div class="ss" style="left:679px;top:391px;font-size:12px">0字</div>
<div class="flat" style="left:569px;top:410px;width:65px;height:21px;"></div>
<div style="left:620px;top:411px;width:13px;height:10px;border:1px solid;border-color:#f8f8f8 #cfcfcf #cfcfcf #f8f8f8;background:#ececec"></div>
<div style="left:620px;top:421px;width:13px;height:9px;border:1px solid;border-color:#f8f8f8 #cfcfcf #cfcfcf #f8f8f8;background:#ececec"></div>
<svg style="left:620px;top:410px" width="13" height="21" viewBox="0 0 13 21" ><path d="M3.6 7.7 L6.6 4.3 L9.6 7.7 Z M3.6 13.9 L6.6 17.3 L9.6 13.9 Z" fill="#5a5a5a"/></svg>
<div class="ss" style="left:572px;top:413px;font-size:12px">0字</div>
<div class="flat" style="left:676px;top:410px;width:63px;height:21px;"></div>
<div style="left:725px;top:411px;width:13px;height:10px;border:1px solid;border-color:#f8f8f8 #cfcfcf #cfcfcf #f8f8f8;background:#ececec"></div>
<div style="left:725px;top:421px;width:13px;height:9px;border:1px solid;border-color:#f8f8f8 #cfcfcf #cfcfcf #f8f8f8;background:#ececec"></div>
<svg style="left:725px;top:410px" width="13" height="21" viewBox="0 0 13 21" ><path d="M3.6 7.7 L6.6 4.3 L9.6 7.7 Z M3.6 13.9 L6.6 17.3 L9.6 13.9 Z" fill="#5a5a5a"/></svg>
<div class="ss" style="left:679px;top:413px;font-size:12px">0字</div>
<div class="panel" style="left:538px;top:61px;width:220px;height:207px;"></div>
<div style="left:539px;top:62px;width:218px;height:6px;background:#fff"></div>
<div style="left:539px;top:68px;width:218px;height:15px;background:linear-gradient(#cbcbcb,#ededed)"></div>
<div style="left:539px;top:83px;width:218px;height:1px;background:#2b5b8c"></div>
<div style="left:539px;top:84px;width:218px;height:1px;background:#9f9b97"></div>
<div style="left:539px;top:85px;width:218px;height:28px;background:linear-gradient(#e8e8e8,#fbfbfb)"></div>
<div style="left:539px;top:113px;width:218px;height:1px;background:#8c8c8c"></div>
<svg style="left:711px;top:68px" width="8" height="10" viewBox="0 0 8 10" ><path d="M0 4 L3.6 0 L7.2 4 Z M0 5.4 L3.6 9.4 L7.2 5.4 Z" fill="#fff"/></svg>
<div style="left:723px;top:73px;width:8px;height:2px;background:#fff"></div>
<svg style="left:735px;top:68px" width="9" height="9" viewBox="0 0 9 9" ><path d="M0.8 0.6 L8.2 8.6 M8.2 0.6 L0.8 8.6" stroke="#fff" stroke-width="2.2" fill="none"/></svg>
<svg style="left:750px;top:69px" width="4" height="8" viewBox="0 0 4 8" ><path d="M0 0 L4 3.8 L0 7.6 Z" fill="#fff"/></svg>
<svg style="left:546px;top:94px" width="78.5" height="21" viewBox="0 0 78.5 21" ><defs><linearGradient id="tab538" x1="0" y1="0" x2="0" y2="1"><stop offset="0" stop-color="#fbfcfe"/><stop offset="1" stop-color="#e3ebf6"/></linearGradient></defs>
<path d="M0 19.5 H0.5 L20 2.5 Q21.5 0.5 24 0.5 H72.5 Q76.0 0.5 76.0 4 V19.5 Z" fill="url(#tab538)"/>
<path d="M-8 19.5 H0.5 L20 2.5 Q21.5 0.5 24 0.5 H72.5 Q76.0 0.5 76.0 4 V19.5" fill="none" stroke="#8a8a8a" stroke-width="1"/>
<rect x="1" y="19" width="74.5" height="2" fill="#e3ebf6"/></svg>
<div class="t" style="left:567px;top:95px;font-weight:bold;font-size:12px;line-height:18px;height:18px">文字属性</div>
<div style="left:542px;top:133px;width:14px;height:22px;background:#c6c6c6;border:1px solid #d2d2d2;border-radius:2px"></div>
<svg style="left:545px;top:136px" width="8" height="15" viewBox="0 0 8 15" ><rect x="1.2" y="0.8" width="5.6" height="8" rx="2.8" fill="none" stroke="#858585" stroke-width="1"/><rect x="2.2" y="1.8" width="3.6" height="6" rx="1.8" fill="none" stroke="#eee" stroke-width="0.9"/><rect x="1.2" y="6" width="5.6" height="8" rx="2.8" fill="none" stroke="#858585" stroke-width="1"/><rect x="2.2" y="7" width="3.6" height="6" rx="1.8" fill="none" stroke="#eee" stroke-width="0.9"/><path d="M4 4 V11" stroke="#fff" stroke-width="1"/><path d="M4.9 4 V11" stroke="#999" stroke-width="0.7"/></svg>
<div style="left:640px;top:133px;width:14px;height:22px;background:#c6c6c6;border:1px solid #d2d2d2;border-radius:2px"></div>
<svg style="left:643px;top:136px" width="8" height="15" viewBox="0 0 8 15" ><rect x="1.2" y="0.8" width="5.6" height="8" rx="2.8" fill="none" stroke="#858585" stroke-width="1"/><rect x="2.2" y="1.8" width="3.6" height="6" rx="1.8" fill="none" stroke="#eee" stroke-width="0.9"/><rect x="1.2" y="6" width="5.6" height="8" rx="2.8" fill="none" stroke="#858585" stroke-width="1"/><rect x="2.2" y="7" width="3.6" height="6" rx="1.8" fill="none" stroke="#eee" stroke-width="0.9"/><path d="M4 4 V11" stroke="#fff" stroke-width="1"/><path d="M4.9 4 V11" stroke="#999" stroke-width="0.7"/></svg>
<div class="sunk" style="left:559px;top:122px;width:80px;height:21px;"></div>
<div class="dd" style="left:625px;top:124px;width:12px;height:17px;"></div>
<svg style="left:626px;top:131px" width="11" height="6" viewBox="0 0 11 6" ><path d="M1.5 0.5 L5.5 4.5 L9.5 0.5" fill="none" stroke="#b0b0b0" stroke-width="1"/></svg>
<div class="ss" style="left:562px;top:124px;font-size:12px;letter-spacing:-0.3px;width:63px;overflow:hidden;height:14px">FZBaoSong-Z</div>
<div class="sunk" style="left:559px;top:144px;width:80px;height:20px;"></div>
<div class="dd" style="left:625px;top:146px;width:12px;height:16px;"></div>
<svg style="left:626px;top:153px" width="11" height="6" viewBox="0 0 11 6" ><path d="M1.5 0.5 L5.5 4.5 L9.5 0.5" fill="none" stroke="#b0b0b0" stroke-width="1"/></svg>
<div class="ss" style="left:562px;top:146px;font-size:12px;letter-spacing:-0.3px;width:63px;overflow:hidden;height:14px">FZBaoSong-</div>
<div class="sunk" style="left:559px;top:167px;width:80px;height:21px;"></div>
<div class="dd" style="left:625px;top:169px;width:12px;height:17px;"></div>
<svg style="left:626px;top:176px" width="11" height="6" viewBox="0 0 11 6" ><path d="M1.5 0.5 L5.5 4.5 L9.5 0.5" fill="none" stroke="#b0b0b0" stroke-width="1"/></svg>
<div class="ss" style="left:562px;top:169px;font-size:12px;letter-spacing:0.5px;width:63px;overflow:hidden;height:14px">Regular</div>
<div class="ss" style="left:656px;top:124px;color:#adadad;font-size:11px;transform:scaleX(0.75);transform-origin:0 0">X</div>
<div class="ss" style="left:656px;top:145px;color:#adadad;font-size:11px;transform:scaleX(0.75);transform-origin:0 0">Y</div>
<div class="sunk" style="left:665px;top:122px;width:89px;height:20px;"></div>
<div class="dd" style="left:741px;top:124px;width:12px;height:16px;"></div>
<svg style="left:742px;top:131px" width="11" height="6" viewBox="0 0 11 6" ><path d="M1.5 0.5 L5.5 4.5 L9.5 0.5" fill="none" stroke="#b0b0b0" stroke-width="1"/></svg>
<div class="ss" style="left:667px;top:125px;font-size:12px;letter-spacing:0px;width:73px;overflow:hidden;height:14px">五号</div>
<div style="left:730px;top:124px;width:10px;height:16px;background:#f0f0f0;border:1px solid #dedede"></div>
<svg style="left:729px;top:123px" width="12" height="18" viewBox="0 0 12 18" ><path d="M3 7.6 L6 4.4 L9 7.6 Z M3 10.8 L6 14.0 L9 10.8 Z" fill="#555"/></svg>
<div class="sunk" style="left:665px;top:144px;width:89px;height:18px;"></div>
<div class="dd" style="left:741px;top:146px;width:12px;height:14px;"></div>
<svg style="left:742px;top:152px" width="11" height="6" viewBox="0 0 11 6" ><path d="M1.5 0.5 L5.5 4.5 L9.5 0.5" fill="none" stroke="#b0b0b0" stroke-width="1"/></svg>
<div class="ss" style="left:667px;top:146px;font-size:12px;letter-spacing:0px;width:73px;overflow:hidden;height:14px">五号</div>
<div style="left:730px;top:146px;width:10px;height:14px;background:#f0f0f0;border:1px solid #dedede"></div>
<svg style="left:729px;top:145px" width="12" height="16" viewBox="0 0 12 16" ><path d="M3 6.6 L6 3.4 L9 6.6 Z M3 9.8 L6 13.0 L9 9.8 Z" fill="#555"/></svg>
<svg style="left:652px;top:172px" width="6" height="11" viewBox="0 0 6 11" ><ellipse cx="2.9" cy="4.6" rx="2.4" ry="2.6" fill="none" stroke="#000" stroke-width="1.1"/><path d="M2.9 0 V11" stroke="#000" stroke-width="1.3"/></svg>
<div class="t" style="left:658px;top:168px;font-size:8px;line-height:10px;height:10px;color:#4a4a4a;font-family:'Liberation Sans',sans-serif">2</div>
<div class="flat" style="left:665px;top:167px;width:89px;height:20px;"></div>
<div class="sep" style="left:539px;top:190px;width:218px;height:2px;"></div>
<svg style="left:543px;top:197px" width="12" height="14" viewBox="0 0 12 14" ><path d="M0.5 2.5 H4.5 V7.5 H0.5 Z M2.5 0.4 V12.5 M6.5 2.5 H10.5 V7.5 H6.5 Z M8.5 0.4 V12.5 M2.5 12.5 H8.5" fill="none" stroke="#6c6c6c" stroke-width="1"/><path d="M4.2 11 L2.6 12.5 L4.2 14 M6.8 11 L8.4 12.5 L6.8 14" fill="none" stroke="#6c6c6c" stroke-width="0.9"/></svg>
<svg style="left:543px;top:219px" width="13" height="12" viewBox="0 0 13 12" ><path d="M4.5 1.5 H12.5 V4.5 H4.5 Z M4.5 7.5 H12.5 V10.5 H4.5 Z M8.5 0 V12" fill="none" stroke="#6c6c6c" stroke-width="1"/><path d="M1.5 3 V8 M0 4.8 L1.5 2.8 L3 4.8 M0 6.2 L1.5 8.2 L3 6.2" fill="none" stroke="#000" stroke-width="1"/></svg>
<div class="t" style="left:543px;top:239px;font-size:8px;letter-spacing:1.4px;line-height:10px;height:10px;color:#000;font-family:'Liberation Sans',sans-serif">AV</div>
<svg style="left:546px;top:249px" width="8" height="4" viewBox="0 0 8 4" ><path d="M0 1.8 H7.2 M1.8 0.2 L0 1.8 L1.8 3.4 M5.4 0.2 L7.2 1.8 L5.4 3.4" fill="none" stroke="#8e0c0c" stroke-width="1"/></svg>
<div class="sunk" style="left:559px;top:194px;width:80px;height:19px;"></div>
<div class="dd" style="left:625px;top:196px;width:12px;height:15px;"></div>
<svg style="left:626px;top:202px" width="11" height="6" viewBox="0 0 11 6" ><path d="M1.5 0.5 L5.5 4.5 L9.5 0.5" fill="none" stroke="#b0b0b0" stroke-width="1"/></svg>
<div class="ss" style="left:563px;top:196px;font-size:13px;letter-spacing:0px;width:62px;overflow:hidden;height:14px">字距</div>
<div class="sunk" style="left:559px;top:215px;width:80px;height:19px;"></div>
<div class="dd" style="left:625px;top:217px;width:12px;height:15px;"></div>
<svg style="left:626px;top:223px" width="11" height="6" viewBox="0 0 11 6" ><path d="M1.5 0.5 L5.5 4.5 L9.5 0.5" fill="none" stroke="#b0b0b0" stroke-width="1"/></svg>
<div class="ss" style="left:563px;top:217px;font-size:13px;letter-spacing:0px;width:62px;overflow:hidden;height:14px">行距</div>
<div class="flat" style="left:559px;top:236px;width:80px;height:21px;"></div>
<div style="left:625px;top:237px;width:13px;height:10px;border:1px solid;border-color:#f8f8f8 #cfcfcf #cfcfcf #f8f8f8;background:#ececec"></div>
<div style="left:625px;top:247px;width:13px;height:9px;border:1px solid;border-color:#f8f8f8 #cfcfcf #cfcfcf #f8f8f8;background:#ececec"></div>
<svg style="left:625px;top:236px" width="13" height="21" viewBox="0 0 13 21" ><path d="M3.6 7.7 L6.6 4.3 L9.6 7.7 Z M3.6 13.9 L6.6 17.3 L9.6 13.9 Z" fill="#5a5a5a"/></svg>
<div class="ss" style="left:562px;top:239px;font-size:12px">0字</div>
<div class="flat" style="left:665px;top:194px;width:89px;height:19px;"></div>
<div style="left:740px;top:195px;width:13px;height:9px;border:1px solid;border-color:#f8f8f8 #cfcfcf #cfcfcf #f8f8f8;background:#ececec"></div>
<div style="left:740px;top:204px;width:13px;height:8px;border:1px solid;border-color:#f8f8f8 #cfcfcf #cfcfcf #f8f8f8;background:#ececec"></div>
<svg style="left:740px;top:194px" width="13" height="19" viewBox="0 0 13 19" ><path d="M3.6 7.2 L6.6 3.8 L9.6 7.2 Z M3.6 12.4 L6.6 15.8 L9.6 12.4 Z" fill="#5a5a5a"/></svg>
<div class="ss" style="left:668px;top:196px;font-size:12px">0字</div>
<div class="flat" style="left:665px;top:215px;width:89px;height:19px;"></div>
<div style="left:740px;top:216px;width:13px;height:9px;border:1px solid;border-color:#f8f8f8 #cfcfcf #cfcfcf #f8f8f8;background:#ececec"></div>
<div style="left:740px;top:225px;width:13px;height:8px;border:1px solid;border-color:#f8f8f8 #cfcfcf #cfcfcf #f8f8f8;background:#ececec"></div>
<svg style="left:740px;top:215px" width="13" height="19" viewBox="0 0 13 19" ><path d="M3.6 7.2 L6.6 3.8 L9.6 7.2 Z M3.6 12.4 L6.6 15.8 L9.6 12.4 Z" fill="#5a5a5a"/></svg>
<div class="ss" style="left:668px;top:217px;font-size:12px"><span style="position:static;letter-spacing:0.7px">0.5</span>字</div>
<svg style="left:646px;top:243px" width="12" height="12" viewBox="0 0 12 12" ><path d="M0.5 2.5 H4.5 V5.5 H0.5 Z M2.5 0 V9 M6.5 2.5 H10.5 V5.5 H6.5 Z M8.5 0 V9" fill="none" stroke="#000" stroke-width="1"/><path d="M0 10.5 H11" stroke="#8e0000" stroke-width="1"/></svg>
<div class="sunk" style="left:665px;top:236px;width:89px;height:20px;"></div>
<div class="dd" style="left:741px;top:238px;width:12px;height:16px;"></div>
<svg style="left:742px;top:245px" width="11" height="6" viewBox="0 0 11 6" ><path d="M1.5 0.5 L5.5 4.5 L9.5 0.5" fill="none" stroke="#b0b0b0" stroke-width="1"/></svg>
<div class="ss" style="left:669px;top:239px;font-size:13px;letter-spacing:0px;width:71px;overflow:hidden;height:14px">基线对齐</div>
<div class="panel" style="left:542px;top:459px;width:220px;height:243px;"></div>
<div style="left:543px;top:460px;width:218px;height:6px;background:#fff"></div>
<div style="left:543px;top:466px;width:218px;height:15px;background:linear-gradient(#cbcbcb,#ededed)"></div>
<div style="left:543px;top:481px;width:218px;height:1px;background:#2b5b8c"></div>
<div style="left:543px;top:482px;width:218px;height:1px;background:#9f9b97"></div>
<div style="left:543px;top:483px;width:218px;height:28px;background:linear-gradient(#e8e8e8,#fbfbfb)"></div>
<div style="left:543px;top:511px;width:218px;height:1px;background:#8c8c8c"></div>
<svg style="left:715px;top:466px" width="8" height="10" viewBox="0 0 8 10" ><path d="M0 4 L3.6 0 L7.2 4 Z M0 5.4 L3.6 9.4 L7.2 5.4 Z" fill="#fff"/></svg>
<div style="left:727px;top:471px;width:8px;height:2px;background:#fff"></div>
<svg style="left:739px;top:466px" width="9" height="9" viewBox="0 0 9 9" ><path d="M0.8 0.6 L8.2 8.6 M8.2 0.6 L0.8 8.6" stroke="#fff" stroke-width="2.2" fill="none"/></svg>
<svg style="left:754px;top:467px" width="4" height="8" viewBox="0 0 4 8" ><path d="M0 0 L4 3.8 L0 7.6 Z" fill="#fff"/></svg>
<svg style="left:550px;top:492px" width="54.5" height="21" viewBox="0 0 54.5 21" ><defs><linearGradient id="tab542" x1="0" y1="0" x2="0" y2="1"><stop offset="0" stop-color="#fbfcfe"/><stop offset="1" stop-color="#e3ebf6"/></linearGradient></defs>
<path d="M0 19.5 H0.5 L20 2.5 Q21.5 0.5 24 0.5 H48.5 Q52.0 0.5 52.0 4 V19.5 Z" fill="url(#tab542)"/>
<path d="M-8 19.5 H0.5 L20 2.5 Q21.5 0.5 24 0.5 H48.5 Q52.0 0.5 52.0 4 V19.5" fill="none" stroke="#8a8a8a" stroke-width="1"/>
<rect x="1" y="19" width="50.5" height="2" fill="#e3ebf6"/></svg>
<div class="t" style="left:571px;top:493px;font-weight:bold;font-size:12px;line-height:18px;height:18px">颜色</div>
<div style="left:711px;top:523px;width:18px;height:16px;background:#c3d5ec;border:1px solid #8fb0da;border-radius:3px"></div>
<div style="left:713px;top:525px;width:14px;height:12px;background:#0b4da0;border:1px solid #fff;outline:1px solid #2f68b4;outline-offset:0"></div>
<div style="left:734px;top:525px;width:14px;height:12px;background:linear-gradient(90deg,#fff,#000);border:1px solid;border-color:#fff #8a8a8a #8a8a8a #fff"></div>
<div class="sep" style="left:543px;top:546px;width:209px;height:2px;"></div>
<div style="left:549px;top:552px;width:42px;height:42px;background:#e6e6e6;border:2px solid;border-color:#bcbcbc #fafafa #fafafa #bcbcbc"></div>
<div style="left:554px;top:557px;width:32px;height:32px;background:#fff;border:1px solid #000"></div>
<div style="left:551px;top:601px;width:10px;height:10px;border:2px solid #3a3a3a;background:#f2f2f2"></div>
<div style="left:568px;top:601px;width:10px;height:10px;border:1px solid #444;background:#555;background-image:repeating-conic-gradient(#444 0% 25%, #bdbdbd 0% 50%);background-size:2px 2px"></div>
<svg style="left:585px;top:603px" width="8" height="7" viewBox="0 0 8 7" ><path d="M0.5 1.5 H7.5 V4.5 H0.5 Z M4 0 V7" fill="none" stroke="#a4a4a4" stroke-width="1.1"/></svg>
<div style="left:597.5px;top:551px;font-family:'Liberation Serif',serif;font-size:12px;line-height:14px;transform:scaleX(0.75);transform-origin:0 50%">C</div>
<div style="left:612px;top:555px;width:83px;height:6px;background:linear-gradient(90deg,#fff,#00aeef);border-left:1px solid #b0b0b0;border-top:1px solid #c4c4c4"></div>
<svg style="left:608px;top:561px" width="10" height="8" viewBox="0 0 10 8" ><defs><linearGradient id="th" x1="0" y1="0" x2="0" y2="1"><stop offset="0" stop-color="#f0f0f0"/><stop offset="1" stop-color="#8c8c8c"/></linearGradient></defs><path d="M4.7 0.7 L9 6.6 H0.4 Z" fill="url(#th)" stroke="#000" stroke-width="1" stroke-linejoin="round"/></svg>
<div style="left:703px;top:552px;width:32px;height:18px;background:#fff;border:1px solid #7c7c7c"></div>
<div style="left:706px;top:554px;font-size:12px;line-height:14px;font-family:'Liberation Sans',sans-serif;transform:scaleX(0.9);transform-origin:0 0">0</div>
<div style="left:738.5px;top:554px;font-weight:bold;font-size:12px;line-height:14px;font-family:'Liberation Serif',serif;transform:scaleX(0.7);transform-origin:0 50%">%</div>
<div style="left:597.5px;top:573px;font-family:'Liberation Serif',serif;font-size:12px;line-height:14px;transform:scaleX(0.62);transform-origin:0 50%">M</div>
<div style="left:612px;top:577px;width:83px;height:6px;background:linear-gradient(90deg,#fff,#e6007e);border-left:1px solid #b0b0b0;border-top:1px solid #c4c4c4"></div>
<svg style="left:608px;top:583px" width="10" height="8" viewBox="0 0 10 8" ><defs><linearGradient id="th" x1="0" y1="0" x2="0" y2="1"><stop offset="0" stop-color="#f0f0f0"/><stop offset="1" stop-color="#8c8c8c"/></linearGradient></defs><path d="M4.7 0.7 L9 6.6 H0.4 Z" fill="url(#th)" stroke="#000" stroke-width="1" stroke-linejoin="round"/></svg>
<div style="left:703px;top:575px;width:32px;height:18px;background:#fff;border:1px solid #7c7c7c"></div>
<div style="left:706px;top:577px;font-size:12px;line-height:14px;font-family:'Liberation Sans',sans-serif;transform:scaleX(0.9);transform-origin:0 0">0</div>
<div style="left:738.5px;top:577px;font-weight:bold;font-size:12px;line-height:14px;font-family:'Liberation Serif',serif;transform:scaleX(0.7);transform-origin:0 50%">%</div>
<div style="left:597.5px;top:596px;font-family:'Liberation Serif',serif;font-size:12px;line-height:14px;transform:scaleX(0.75);transform-origin:0 50%">Y</div>
<div style="left:612px;top:600px;width:83px;height:6px;background:linear-gradient(90deg,#fff,#fff200);border-left:1px solid #b0b0b0;border-top:1px solid #c4c4c4"></div>
<svg style="left:608px;top:606px" width="10" height="8" viewBox="0 0 10 8" ><defs><linearGradient id="th" x1="0" y1="0" x2="0" y2="1"><stop offset="0" stop-color="#f0f0f0"/><stop offset="1" stop-color="#8c8c8c"/></linearGradient></defs><path d="M4.7 0.7 L9 6.6 H0.4 Z" fill="url(#th)" stroke="#000" stroke-width="1" stroke-linejoin="round"/></svg>
<div style="left:703px;top:597px;width:32px;height:18px;background:#fff;border:1px solid #7c7c7c"></div>
<div style="left:706px;top:599px;font-size:12px;line-height:14px;font-family:'Liberation Sans',sans-serif;transform:scaleX(0.9);transform-origin:0 0">0</div>
<div style="left:738.5px;top:599px;font-weight:bold;font-size:12px;line-height:14px;font-family:'Liberation Serif',serif;transform:scaleX(0.7);transform-origin:0 50%">%</div>
<div style="left:597.5px;top:618px;font-family:'Liberation Serif',serif;font-size:12px;line-height:14px;transform:scaleX(0.75);transform-origin:0 50%">K</div>
<div style="left:612px;top:622px;width:83px;height:6px;background:linear-gradient(90deg,#fff,#000);border-left:1px solid #b0b0b0;border-top:1px solid #c4c4c4"></div>
<svg style="left:608px;top:628px" width="10" height="8" viewBox="0 0 10 8" ><defs><linearGradient id="th" x1="0" y1="0" x2="0" y2="1"><stop offset="0" stop-color="#f0f0f0"/><stop offset="1" stop-color="#8c8c8c"/></linearGradient></defs><path d="M4.7 0.7 L9 6.6 H0.4 Z" fill="url(#th)" stroke="#000" stroke-width="1" stroke-linejoin="round"/></svg>
<div style="left:703px;top:620px;width:32px;height:18px;background:#fff;border:1px solid #7c7c7c"></div>
<div style="left:706px;top:622px;font-size:12px;line-height:14px;font-family:'Liberation Sans',sans-serif;transform:scaleX(0.9);transform-origin:0 0">0</div>
<div style="left:738.5px;top:622px;font-weight:bold;font-size:12px;line-height:14px;font-family:'Liberation Serif',serif;transform:scaleX(0.7);transform-origin:0 50%">%</div>
<div style="left:549px;top:648px;width:201px;height:17px;background:#000"></div>
<div style="left:550px;top:649px;width:14px;height:15px;background:#fff"></div>
<svg style="left:550px;top:649px" width="14" height="15" viewBox="0 0 14 15" ><path d="M0.5 15 L13.5 0" stroke="#ff2020" stroke-width="1"/></svg>
<div style="left:564px;top:649px;width:176px;height:15px;background:linear-gradient(180deg,rgba(255,255,255,.55) 0,rgba(255,255,255,0) 30%,rgba(0,0,0,0) 36%,#000 100%),linear-gradient(90deg,#f00 0,#ff0 16.6%,#0f0 33.3%,#0ff 50%,#00f 66.6%,#f0f 83.3%,#f00 100%)"></div>
<div style="left:740px;top:656px;width:9px;height:8px;background:#fff"></div>
<div class="sep" style="left:543px;top:670px;width:209px;height:2px;"></div>
<svg style="left:731px;top:676px" width="16" height="16" viewBox="0 0 16 16" ><path d="M4 3 H7 V1 H12 V3 H14.5 V14.5 H0.8 V5 H4 Z" fill="#e3e3e3" stroke="#8a8a8a" stroke-width="1"/><path d="M3.6 8 V12.4 H11.6 V8" fill="none" stroke="#7a7a7a" stroke-width="1.3"/><path d="M6 2.6 H10.6 L8.8 5 H11 L7.4 8.8 L4.4 5.6 H6.6 Z" fill="#9a9a9a"/></svg>
</body></html>
